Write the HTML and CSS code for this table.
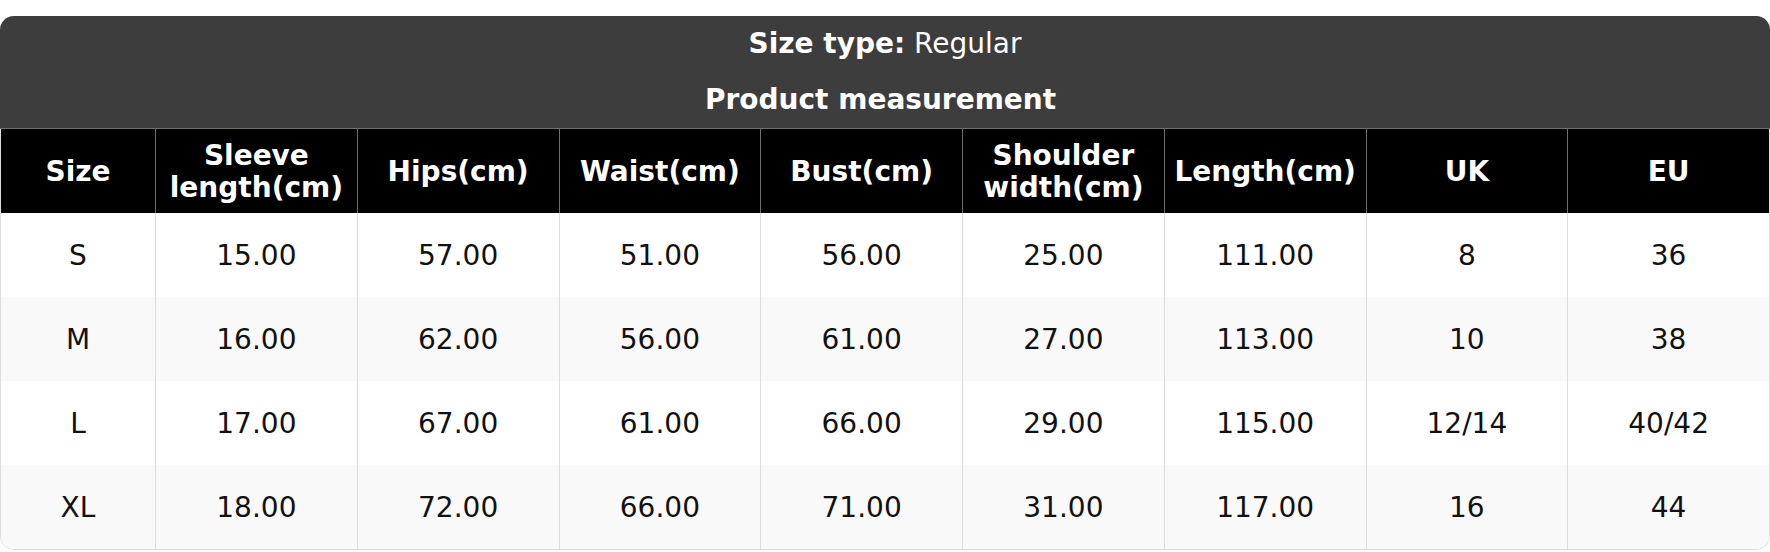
FILE: index.html
```html
<!DOCTYPE html>
<html lang="en">
<head>
<meta charset="utf-8">
<title>Size chart</title>
<link rel="stylesheet" href="styles.css">
</head>
<body>
<div class="chart">
  <div class="title">
    <div class="title-line"><b>Size type:</b> Regular</div>
    <div class="title-line"><b>Product measurement</b>&nbsp;</div>
  </div>
  <div class="grid">
    <div class="row head">
      <div class="cell">Size</div>
      <div class="cell">Sleeve<br>length(cm)</div>
      <div class="cell">Hips(cm)</div>
      <div class="cell">Waist(cm)</div>
      <div class="cell">Bust(cm)</div>
      <div class="cell">Shoulder<br>width(cm)</div>
      <div class="cell">Length(cm)</div>
      <div class="cell">UK</div>
      <div class="cell">EU</div>
    </div>
    <div class="row">
      <div class="cell">S</div><div class="cell">15.00</div><div class="cell">57.00</div><div class="cell">51.00</div><div class="cell">56.00</div><div class="cell">25.00</div><div class="cell">111.00</div><div class="cell">8</div><div class="cell">36</div>
    </div>
    <div class="row alt">
      <div class="cell">M</div><div class="cell">16.00</div><div class="cell">62.00</div><div class="cell">56.00</div><div class="cell">61.00</div><div class="cell">27.00</div><div class="cell">113.00</div><div class="cell">10</div><div class="cell">38</div>
    </div>
    <div class="row">
      <div class="cell">L</div><div class="cell">17.00</div><div class="cell">67.00</div><div class="cell">61.00</div><div class="cell">66.00</div><div class="cell">29.00</div><div class="cell">115.00</div><div class="cell">12/14</div><div class="cell">40/42</div>
    </div>
    <div class="row alt">
      <div class="cell">XL</div><div class="cell">18.00</div><div class="cell">72.00</div><div class="cell">66.00</div><div class="cell">71.00</div><div class="cell">31.00</div><div class="cell">117.00</div><div class="cell">16</div><div class="cell">44</div>
    </div>
  </div>
</div>
</body>
</html>
```

FILE: styles.css
```css
* { box-sizing: border-box; }
html, body { margin: 0; padding: 0; background: #ffffff; }
body {
  font-family: "DejaVu Sans", Verdana, sans-serif;
  font-size: 28px;
  color: #111111;
  padding-top: 16px;
}
.chart {
  width: 1770px;
  border-radius: 14px;
  overflow: hidden;
}
.title {
  background: #3d3d3d;
  color: #ffffff;
  text-align: center;
  padding: 12px 0 12px;
  display: flex;
  flex-direction: column;
  gap: 24px;
  border-bottom: 1px solid #6e6e6e;
}
.title-line { line-height: 32px; }
.title-line b { font-weight: bold; }
.grid {
  border: 1px solid #dddddd;
  border-top: none;
  border-radius: 0 0 14px 14px;
  overflow: hidden;
}
.row {
  display: grid;
  grid-template-columns: 154px repeat(8, 1fr);
  height: 84px;
  background: #ffffff;
}
.row.alt { background: #f9f9f9; }
.cell {
  display: flex;
  align-items: center;
  justify-content: center;
  text-align: center;
  line-height: 32px;
  padding-top: 2px;
  border-left: 1px solid #dddddd;
}
.cell:first-child { border-left: none; }
.row.head { background: #000000; color: #ffffff; font-weight: bold; }
.row.head .cell { border-left-color: #6e6e6e; }
.row.head .cell:first-child { border-left: none; }
```
